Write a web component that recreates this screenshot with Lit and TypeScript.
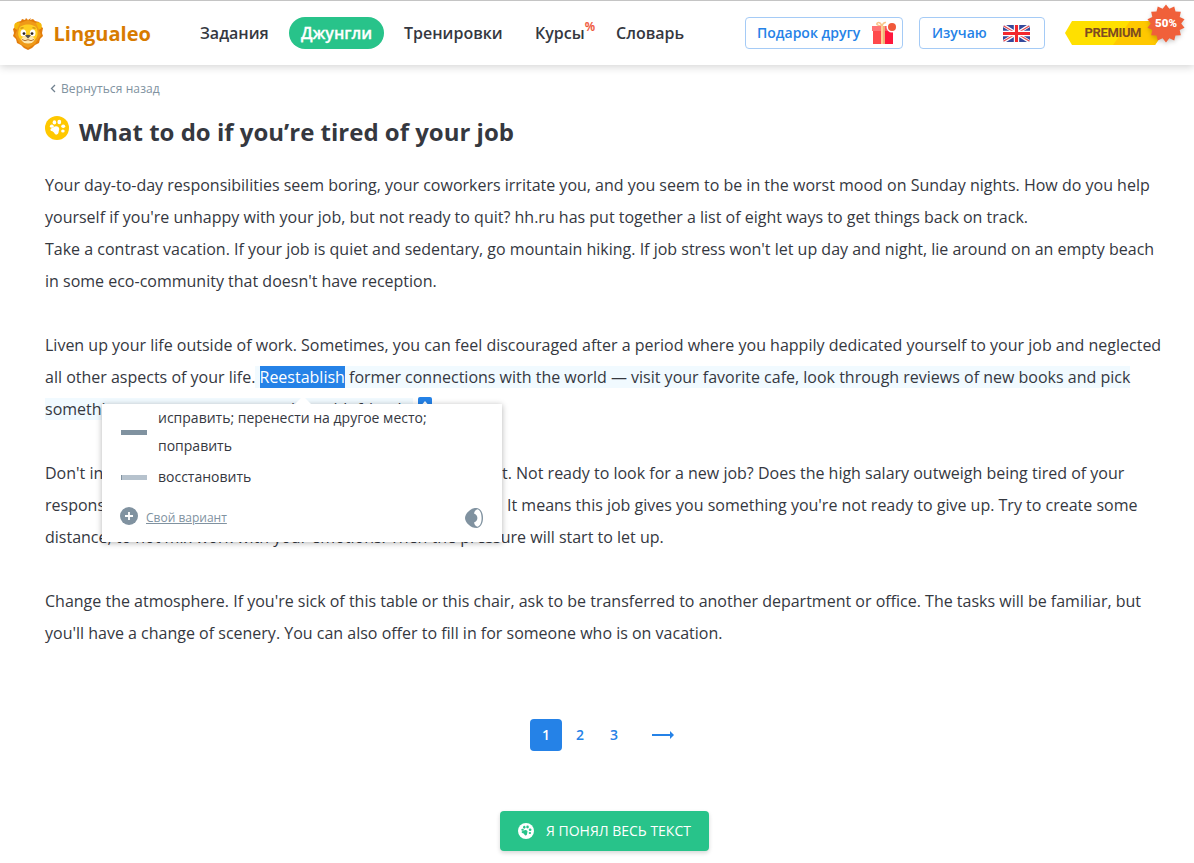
import { LitElement, html, svg, css } from "lit";
import { customElement, property } from "lit/decorators.js";

const LINES = [
  "Your day-to-day responsibilities seem boring, your coworkers irritate you, and you seem to be in the worst mood on Sunday nights. How do you help",
  "yourself if you're unhappy with your job, but not ready to quit? hh.ru has put together a list of eight ways to get things back on track.",
  "Take a contrast vacation. If your job is quiet and sedentary, go mountain hiking. If job stress won't let up day and night, lie around on an empty beach",
  "in some eco-community that doesn't have reception.",
];

const PAW_PADS = svg`
  <ellipse cx="6.8" cy="10.2" rx="1.9" ry="1.6" />
  <ellipse cx="9.4" cy="6.4" rx="1.8" ry="2.1" />
  <ellipse cx="14.3" cy="6" rx="1.9" ry="2.2" />
  <ellipse cx="18.2" cy="10.2" rx="2" ry="1.8" />
  <ellipse cx="17.9" cy="15" rx="1.8" ry="1.6" />
  <path d="M8.5 11.2C10.8 9.6 13.6 10.4 14.2 12.5C14.5 13.7 13.8 14.4 13.7 15.6C13.6 17.4 12.6 18.9 11 18.6C9.5 18.3 9.6 16.7 8.4 15.9C7.2 15.2 5.2 15.2 5.4 13.6C5.6 12.2 7.2 12 8.5 11.2Z" />
`;

@customElement("leo-paw")
export class LeoPaw extends LitElement {
  static styles = css`
    :host {
      display: block;
    }
    svg {
      display: block;
      width: 100%;
      height: 100%;
    }
    .disc {
      fill: var(--paw-disc, #ffc800);
    }
    .pads {
      fill: var(--paw-pads, white);
    }
  `;

  render() {
    return html`
      <svg viewBox="0 0 24 24">
        <circle class="disc" cx="12" cy="12" r="12" />
        <g class="pads">${PAW_PADS}</g>
      </svg>
    `;
  }
}

@customElement("leo-header")
export class LeoHeader extends LitElement {
  static styles = css`
    :host {
      display: block;
      position: relative;
      z-index: 2;
    }
    .bar {
      box-sizing: border-box;
      display: flex;
      align-items: center;
      height: 65px;
      border-top: 1px solid #c4c4c4;
      background: white;
      box-shadow: 0 2px 8px rgba(0, 0, 0, 0.17);
      padding-left: 12px;
      white-space: nowrap;
      color: #35383f;
    }
    .lion {
      display: block;
      width: 32px;
      height: 33px;
    }
    .brand {
      width: 147px;
      padding-left: 9.5px;
      box-sizing: border-box;
      font-size: 20px;
      font-weight: 700;
      color: #d87b00;
    }
    nav {
      display: flex;
      align-items: center;
      width: 554px;
      font-size: 16px;
      font-weight: 600;
    }
    .link {
      box-sizing: border-box;
      padding-left: 9px;
    }
    .tasks {
      width: 98px;
    }
    .jungle {
      box-sizing: border-box;
      width: 95px;
      height: 32px;
      border-radius: 16px;
      background: #28c38a;
      color: white;
      line-height: 32px;
      text-align: center;
      -webkit-text-stroke: 0.3px white;
    }
    .training {
      width: 131px;
      padding-left: 20px;
    }
    .courses {
      width: 92px;
      padding-left: 20px;
    }
    .sale {
      display: inline-block;
      font-size: 12px;
      line-height: 12px;
      transform: translateY(-8px);
      color: #f0583a;
      -webkit-text-stroke: 0.2px #f0583a;
    }
    .outline {
      box-sizing: border-box;
      display: flex;
      align-items: center;
      height: 32px;
      border: 1px solid #a5cbf6;
      border-radius: 4px;
      font-size: 14px;
      font-weight: 600;
      color: #2582e7;
    }
    .label {
      padding-bottom: 2px;
    }
    .gift {
      width: 158px;
      padding-left: 11px;
      gap: 11px;
    }
    .learn {
      width: 126px;
      margin-left: 16px;
      padding-left: 12px;
      gap: 16px;
    }
    .premium {
      position: relative;
      display: block;
      width: 120px;
      height: 44px;
      margin: -16px 0 0 20px;
    }
    .premium text {
      font-family: Roboto, sans-serif;
    }
  `;

  renderLion() {
    return html`
      <svg class="lion" viewBox="0 0 32 33">
        <path fill="#e37d0b" d="M16 3L14 1L13 3L10 2L9 4L5 5L4 9L1 12L2 16L1 19L4 22L5 26L9 28L12 31L16 33L20 31L23 28L27 26L28 22L31 19L30 16L31 11L28 9L27 5L23 4L21 2L18 3L19 1Z" />
        <circle cx="6" cy="9" r="3.8" fill="#f6b90b" />
        <circle cx="26" cy="9" r="3.8" fill="#f6b90b" />
        <path fill="#ef9a18" d="M8 6L16 3L24 6L29 18L23 27L16 31L8 27L3 18Z" />
        <path fill="#ffcf20" d="M7 12C8 6 24 6 25 12C27 18 24 23 21 24H11C7 22 5 18 7 12Z" />
        <ellipse cx="11.3" cy="16" rx="2.8" ry="3.5" fill="white" />
        <ellipse cx="20.7" cy="16" rx="2.8" ry="3.5" fill="white" />
        <circle cx="12" cy="16.6" r="1.4" fill="#29221f" />
        <circle cx="20" cy="16.6" r="1.4" fill="#29221f" />
        <path d="M8.5 11.2L11.5 10.8M20.5 10.8L23.5 11.2" stroke="#a8650f" stroke-width=".8" />
        <ellipse cx="16" cy="22.5" rx="6.5" ry="4" fill="#ffe8ad" />
        <path d="M13 18.5Q16 17 19 18.5L16 21.5Z" fill="#52504e" />
        <path d="M10 22.5Q13 24.8 16 22.7Q19 24.8 22 22.5" fill="none" stroke="#b37635" />
      </svg>
    `;
  }

  renderGift() {
    return html`
      <svg width="26" height="24" viewBox="0 0 26 24">
        <path d="M10.5 5C6 5 5 3 6.5 1.8C8.5.5 10 3 11 5C12 2 13 1 15 1.5" fill="none" stroke="#f9c58a" stroke-width="1.5" />
        <path fill="#ff7374" d="M1 5H19V10H1Z" />
        <path fill="#ff4a4c" d="M2 10H11V23H2Z" />
        <path fill="#ff183c" d="M13 10H22V23H13Z" />
        <path fill="#ff5260" d="M13 5H17L22 10H13Z" />
        <path fill="#ffd095" d="M10 5H12V23H10Z" />
        <path fill="#efb176" d="M12 5H14V23H12Z" />
        <circle cx="21" cy="6" r="5.5" fill="white" />
        <circle cx="21" cy="6" r="4" fill="#f0583a" />
      </svg>
    `;
  }

  renderFlag() {
    return html`
      <svg width="27" height="17" viewBox="0 0 28 18" preserveAspectRatio="none">
        <defs>
          <clipPath id="flag"><rect width="28" height="18" rx="3" /></clipPath>
        </defs>
        <g clip-path="url(#flag)">
          <path fill="#35499b" d="M0 0H28V18H0Z" />
          <path stroke="white" stroke-width="3.4" d="M0 0L28 18M28 0L0 18" />
          <path stroke="#e8494f" stroke-width="1.2" d="M0 .5L28 17.5M28 .5L0 17.5" />
          <path stroke="white" stroke-width="5.6" d="M14 0V18M0 9H28" />
          <path stroke="#f3272d" stroke-width="3.2" d="M14 0V18M0 9H28" />
        </g>
      </svg>
    `;
  }

  renderPremium() {
    const points = Array.from({ length: 28 }, (_, i) => {
      const radius = i % 2 ? 15.2 : 19;
      const angle = (i * Math.PI) / 14 - Math.PI / 2;
      return `${101 + radius * Math.cos(angle)},${20.5 + radius * Math.sin(angle)}`;
    }).join(" ");
    return html`
      <svg class="premium" viewBox="0 0 120 44" overflow="visible">
        <path fill="#ffe000" d="M7 18H90L98 30L90 42H7L0 30Z" />
        <path fill="#ffc800" d="M65 18H90L98 30L90 42H48Z" />
        <text x="19.5" y="34.2" font-size="13" font-weight="700" fill="#7e4b20" textLength="57">PREMIUM</text>
        <polygon points=${points} fill="#f0603a" style="filter: drop-shadow(0 2px 2px rgba(0,0,0,.2))" />
        <text x="101" y="24.2" font-size="11.5" font-weight="900" fill="white" text-anchor="middle" textLength="22">50%</text>
      </svg>
    `;
  }

  render() {
    return html`
      <header class="bar">
        ${this.renderLion()}
        <div class="brand">Lingualeo</div>
        <nav>
          <span class="link tasks">Задания</span>
          <span class="jungle">Джунгли</span>
          <span class="link training">Тренировки</span>
          <span class="link courses">Курсы<span class="sale">%</span></span>
          <span class="link">Словарь</span>
        </nav>
        <div class="outline gift"><span class="label">Подарок другу</span>${this.renderGift()}</div>
        <div class="outline learn"><span class="label">Изучаю</span>${this.renderFlag()}</div>
        ${this.renderPremium()}
      </header>
    `;
  }
}

@customElement("leo-translations")
export class LeoTranslations extends LitElement {
  static styles = css`
    :host {
      display: block;
      box-sizing: border-box;
      width: 400px;
      height: 138px;
      background: white;
      box-shadow: 0 1px 6px rgba(0, 0, 0, 0.3);
      font-size: 14px;
      line-height: 28px;
      color: #35383f;
    }
    .arrow {
      position: absolute;
      left: 193px;
      top: -8px;
      border: 8px solid transparent;
      border-top: 0;
      border-bottom-color: white;
    }
    .option {
      display: grid;
      grid-template-columns: 26px 1fr;
      column-gap: 11px;
      align-items: center;
      padding-left: 19px;
    }
    .option + .option {
      margin-top: 3px;
    }
    .bar {
      height: 5px;
      background: #8092a0;
    }
    .bar.rare {
      box-sizing: border-box;
      background: #b6c2cd;
      border-left: 1px solid #8092a0;
    }
    .footer {
      display: flex;
      align-items: center;
      padding: 13px 19px 0 18px;
      font-size: 12px;
      color: #8092a0;
    }
    .own {
      margin-left: 8px;
      flex: 1;
      text-decoration: underline;
    }
    svg {
      display: block;
    }
    .plus {
      margin-top: -4px;
    }
  `;

  @property({ type: Array }) options: string[][] = [
    ["исправить; перенести на другое место;", "поправить"],
    ["восстановить"],
  ];

  render() {
    return html`
      <span class="arrow"></span>
      ${this.options.map(
        (rows, i) => html`
          <div class="option">
            <span class=${i === 0 ? "bar" : "bar rare"}></span>
            <span>${rows.map((row) => html`<div>${row}</div>`)}</span>
          </div>
        `
      )}
      <div class="footer">
        <svg class="plus" width="18" height="18" viewBox="0 0 18 18">
          <circle cx="9" cy="9" r="9" fill="#8092a0" />
          <path d="M9 5V13M5 9H13" stroke="white" stroke-width="1.8" />
        </svg>
        <span class="own">Свой вариант</span>
        <svg width="19" height="20" viewBox="0 0 19 20">
          <path fill="#8092a0" d="M13 0C17 1 19 5 19 10S17 19 13 20C9 20 7 19 5 17C2 14.5 1 12 1 10S2 5.5 5 3C7 1 9 0 13 0Z" />
          <path fill="white" d="M13.5 1.2C16.5 2.2 17.6 6 17.6 10S16.5 17.8 13.5 18.8C11 18 10 16 10.2 14.3C12 14 13.4 12 13.4 10S12 6 10.2 5.7C10 4 11 2 13.5 1.2Z" />
        </svg>
      </div>
    `;
  }
}

@customElement("app-root")
export class AppRoot extends LitElement {
  static styles = css`
    :host {
      display: block;
      height: 863px;
      overflow: hidden;
      background: white;
      font-family: "Open Sans", "Noto Sans", sans-serif;
      color: #35383f;
    }
    main {
      padding: 14px 0 0 45px;
      white-space: nowrap;
    }
    .back {
      display: flex;
      align-items: center;
      gap: 5px;
      height: 18px;
      padding-left: 5px;
      font-size: 12px;
      letter-spacing: 0.1px;
      color: #8092a0;
    }
    .title {
      display: flex;
      height: 36px;
      margin-top: 17px;
    }
    .title leo-paw {
      width: 24px;
      height: 24px;
      margin: 2px 10px 0 0;
    }
    h1 {
      margin: 0;
      font-size: 24px;
      line-height: 36px;
      font-weight: 700;
    }
    .article {
      position: relative;
      margin-top: 19px;
      font-size: 16px;
      line-height: 32px;
    }
    .line {
      height: 32px;
    }
    .gap {
      height: 32px;
    }
    .lead {
      display: inline-block;
    }
    .current {
      background: #f1faff;
    }
    .selected {
      background: #2582e7;
      color: white;
    }
    .hint {
      display: inline-block;
      width: 14px;
      height: 16px;
      margin: 4px 0 0 5px;
      vertical-align: top;
      border-radius: 2px;
      background: #2582e7;
    }
    .hint svg {
      display: block;
    }
    leo-translations {
      position: absolute;
      left: 57px;
      top: 235px;
    }
    .pages {
      display: flex;
      align-items: center;
      height: 32px;
      margin: 70px 0 0 485px;
      font-size: 14px;
      font-weight: 600;
      color: #2582e7;
    }
    .page {
      width: 32px;
      margin-right: 2px;
      line-height: 32px;
      text-align: center;
      border-radius: 4px;
    }
    .page.active {
      background: #2582e7;
      color: white;
    }
    .next {
      margin-left: 20px;
    }
    .done {
      box-sizing: border-box;
      display: flex;
      align-items: center;
      gap: 12px;
      width: 209px;
      height: 40px;
      margin: 60px 0 0 455px;
      padding: 0 0 0 18px;
      border: 0;
      border-radius: 4px;
      background: #28c38a;
      box-shadow: 0 2px 4px rgba(0, 0, 0, 0.16);
      font: 14px "Open Sans", sans-serif;
      color: white;
    }
    .done span {
      padding-bottom: 2px;
    }
    .done leo-paw {
      width: 16px;
      height: 16px;
      --paw-disc: white;
      --paw-pads: #28c38a;
    }
  `;

  render() {
    return html`
      <leo-header></leo-header>
      <main>
        <div class="back">
          <svg width="6" height="9" viewBox="0 0 6 9">
            <path d="M5 1L1.5 4.5L5 8" fill="none" stroke="#70818f" stroke-width="1.3" />
          </svg>
          Вернуться назад
        </div>
        <div class="title">
          <leo-paw></leo-paw>
          <h1>What to do if you’re tired of your job</h1>
        </div>
        <section class="article">
          ${LINES.map((line) => html`<div class="line"><span>${line}</span></div>`)}
          <div class="gap"></div>
          <div class="line">Liven up your life outside of work. Sometimes, you can feel discouraged after a period where you happily dedicated yourself to your job and neglected</div>
          <div class="line">all other aspects of your life.<span class="current"> <span class="selected">Reestablish</span> former connections with the world — visit your favorite cafe, look through reviews of new books and pick</span></div>
          <div class="line"><span class="current"><span class="lead" style="width: 246px">something</span><span class="lead" style="width: 30px">in</span>with friends.</span><span class="hint"><svg width="14" height="16" viewBox="0 0 14 16"><path fill="white" d="M7 4L9.5 7V12H4.5V7Z" /></svg></span></div>
          <div class="gap"></div>
          <div class="line"><span class="lead" style="width: 457px">Don't interpret</span>t. Not ready to look for a new job? Does the high salary outweigh being tired of your</div>
          <div class="line"><span class="lead" style="width: 462px">responsibilities</span>It means this job gives you something you're not ready to give up. Try to create some</div>
          <div class="line">distance, to not mix work with your emotions. Then the pressure will start to let up.</div>
          <div class="gap"></div>
          <div class="line">Change the atmosphere. If you're sick of this table or this chair, ask to be transferred to another department or office. The tasks will be familiar, but</div>
          <div class="line">you'll have a change of scenery. You can also offer to fill in for someone who is on vacation.</div>
          <leo-translations></leo-translations>
        </section>
        <div class="pages">
          <span class="page active">1</span>
          <span class="page">2</span>
          <span class="page">3</span>
          <svg class="next" width="22" height="10" viewBox="0 0 22 10">
            <path fill="#2582e7" d="M0 4H18V1L22 5L18 9V6H0Z" />
          </svg>
        </div>
        <button class="done"><leo-paw></leo-paw><span>Я ПОНЯЛ ВЕСЬ ТЕКСТ</span></button>
      </main>
    `;
  }
}
